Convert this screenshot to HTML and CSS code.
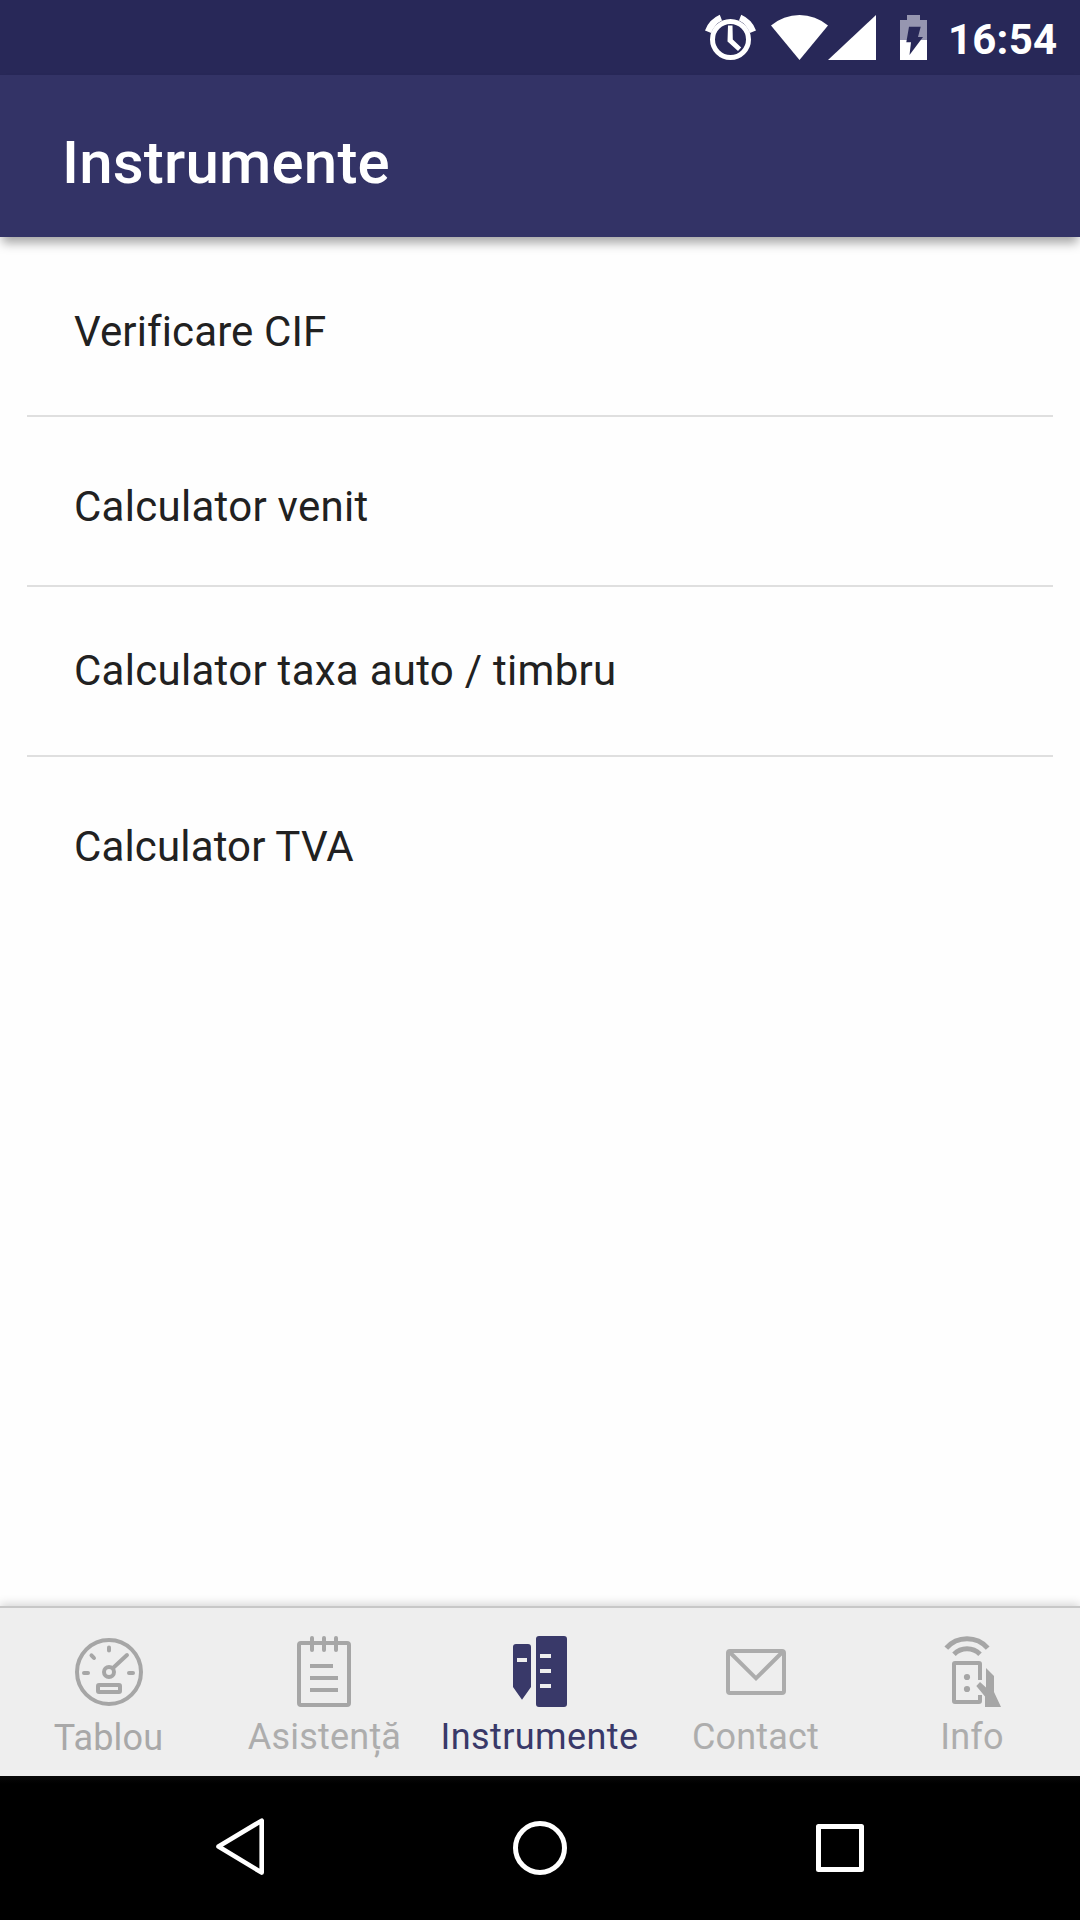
FILE: index.html
```html
<!DOCTYPE html>
<html lang="ro">
<head>
<meta charset="utf-8">
<title>Instrumente</title>
<link rel="stylesheet" href="styles.css">
</head>
<body>
<div class="screen">
  <div class="status-bar">
    <svg class="alarm" width="54" height="50" viewBox="0 0 54 50">
      <circle cx="26.5" cy="27.5" r="18" fill="none" stroke="#fff" stroke-width="5"/>
      <path fill="#fff" d="M1 18.4Q5 7.5 15.8 2.8L18 8.4Q10.6 12 7.2 20.9ZM52 18.4Q48 7.5 37.2 2.8L35 8.4Q42.4 12 45.8 20.9ZM24 13.4H28.5L28.8 27.4L37.2 35.4L34 38.9L23.5 29.6Z"/>
    </svg>
    <svg class="wifi" width="57" height="45" viewBox="0 0 57 45"><path fill="#fff" d="M28.5 45L0 10.5A44 44 0 0 1 57 10.5Z"/></svg>
    <svg class="signal" width="48" height="45" viewBox="0 0 48 45"><path fill="#fff" d="M48 0V45H0Z"/></svg>
    <svg class="battery" width="27" height="45" viewBox="0 0 27 45">
      <path fill="#9696b0" d="M7 0H20V5H27V25H0V5H7Z"/>
      <path fill="#fff" d="M0 25H27V45H0Z"/>
      <path fill="#282858" d="M9 11.7H20.7L18 22H23L9.5 40L11 27.3H6.3Z"/>
    </svg>
    <span class="time">16:54</span>
  </div>

  <header class="app-bar"><h1 class="title">Instrumente</h1></header>

  <main class="content">
    <ul class="tools">
      <li class="tool">Verificare CIF</li>
      <li class="tool">Calculator venit</li>
      <li class="tool">Calculator taxa auto / timbru</li>
      <li class="tool">Calculator TVA</li>
    </ul>
  </main>

  <nav class="tabs">
    <a class="tab tab-dashboard">
      <svg width="72" height="72" viewBox="0 0 72 72" fill="none" stroke="currentColor" stroke-width="4" stroke-linecap="round">
        <circle cx="37" cy="36" r="32"/>
        <circle cx="37" cy="36" r="5"/>
        <path d="M41 32L55 19M37 11.5V14.5M19.5 19.3L22 22M12 37H16M57 37H61"/>
        <rect x="26" y="49" width="22" height="7" rx="1"/>
      </svg>
      <span class="label">Tablou</span>
    </a>
    <a class="tab tab-assist">
      <svg width="72" height="72" viewBox="0 0 72 72" fill="none" stroke="currentColor" stroke-width="4">
        <rect x="11" y="7" width="50" height="62" rx="2"/>
        <path stroke-linecap="round" d="M24 2V14M36 2V14M48 2V14"/>
        <path d="M22 30H45M22 42H50M22 54H50"/>
      </svg>
      <span class="label">Asistență</span>
    </a>
    <a class="tab tab-tools active">
      <svg width="72" height="72" viewBox="0 0 72 72" fill="currentColor" fill-rule="evenodd">
        <path d="M12 8H24Q27 8 27 11V51L18 63.7L9 51V11Q9 8 12 8ZM13 22V26H23V22Z"/>
        <path d="M35 0H60Q63 0 63 3V68Q63 71 60 71H35Q32 71 32 68V3Q32 0 35 0ZM36 18V22H47V18ZM36 33V37H47V33ZM36 48V52H47V48Z"/>
      </svg>
      <span class="label">Instrumente</span>
    </a>
    <a class="tab tab-contact">
      <svg width="72" height="72" viewBox="0 0 72 72" fill="none" stroke="currentColor" stroke-width="4">
        <rect x="8" y="15" width="56" height="42" rx="2"/>
        <path d="M9 15.5L36 42.3L63 15.5"/>
      </svg>
      <span class="label">Contact</span>
    </a>
    <a class="tab tab-info">
      <svg width="72" height="72" viewBox="0 0 72 72" fill="none" stroke="currentColor" stroke-width="4">
        <path stroke-width="5" d="M10.3 12.2A27.6 27.6 0 0 1 51.7 12.2M18 18.2A18.5 18.5 0 0 1 44 18.2"/>
        <path d="M44 44V28Q44 27 43 27H19Q18 27 18 28V65Q18 66 19 66H43Q44 66 44 65V59"/>
        <g fill="currentColor" stroke="none">
          <circle cx="31" cy="41" r="3.1"/>
          <circle cx="31" cy="53" r="3.1"/>
          <path d="M50 32L58 40V56L65 71H49V60.5L40.3 50L44 46L50 51.5Z"/>
        </g>
      </svg>
      <span class="label">Info</span>
    </a>
  </nav>

  <div class="system-nav">
    <svg width="54" height="60" viewBox="0 0 54 60" fill="none" stroke="#fff" stroke-width="4.6" stroke-linejoin="round"><path d="M5.5 28.5L48.7 2.6V54.6Z"/></svg>
    <svg width="54" height="54" viewBox="0 0 54 54" fill="none" stroke="#fff" stroke-width="5"><circle cx="27" cy="27" r="24.5"/></svg>
    <svg width="54" height="54" viewBox="0 0 54 54" fill="none" stroke="#fff" stroke-width="5" stroke-linejoin="round"><path d="M5.5 5.5H48.5V48.5H5.5Z"/></svg>
  </div>
</div>
</body>
</html>
```

FILE: styles.css
```css
* {
  box-sizing: border-box;
}

body {
  margin: 0;
  font-family: Roboto, sans-serif;
}

.screen {
  display: flex;
  flex-direction: column;
  width: 1080px;
  height: 1920px;
  background: #fefefe;
  overflow: hidden;
}

.status-bar {
  display: flex;
  flex: none;
  align-items: flex-start;
  justify-content: flex-end;
  height: 75px;
  padding-top: 15px;
  background: #282858;
  color: #fff;
}

.alarm {
  margin: -3px 13px 0 0;
}

.battery {
  margin: 0 21px 0 24px;
}

.time {
  width: 132px;
  font-size: 42px;
  font-weight: 700;
  line-height: 49px;
  letter-spacing: 0.2px;
}

.app-bar {
  flex: none;
  height: 162px;
  padding: 52px 62px 0;
  background: #333366;
  box-shadow: 0 8px 10px -2px rgba(0, 0, 0, 0.35);
}

.title {
  margin: 0;
  color: #fff;
  font-size: 60px;
  font-weight: 500;
  line-height: 71px;
  letter-spacing: 0.2px;
}

.content {
  flex: 1;
  padding: 10px 27px 0;
}

.tools {
  margin: 0;
  padding: 0;
  list-style: none;
}

.tool {
  height: 170px;
  padding: 60px 0 0 47px;
  border-bottom: 2px solid #dfdfdf;
  color: #212121;
  font-size: 42px;
  line-height: 49px;
  letter-spacing: 0.28px;
}

.tool:first-child {
  letter-spacing: 0.12px;
}

.tool:nth-child(2n) {
  padding-top: 65px;
}

.tool:nth-child(3) {
  padding-top: 59px;
}

.tool:last-child {
  border-bottom: 0;
  letter-spacing: 0.15px;
}

.tabs {
  display: grid;
  flex: none;
  grid-template-columns: repeat(5, 1fr);
  height: 170px;
  border-top: 2px solid #c8c8c8;
  background: #eee;
  box-shadow: 0 -2px 9px rgba(0, 0, 0, 0.17);
}

.tab {
  display: flex;
  flex-direction: column;
  align-items: center;
  gap: 8px;
  padding-top: 28px;
  color: #a6a6a6;
}

.tab-contact {
  color: #acacac;
}

.label {
  color: #adadad;
  font-size: 36px;
  line-height: 42px;
  letter-spacing: 0.2px;
  white-space: nowrap;
}

.tab-dashboard .label {
  padding: 1px 0 0 1px;
  color: #a8a8a8;
}

.tab-assist .label {
  padding-left: 1px;
}

.tab-contact .label {
  padding-right: 1px;
}

.active,
.active .label {
  color: #393969;
}

.active .label {
  padding-right: 1px;
  letter-spacing: 0.4px;
}

.system-nav {
  display: flex;
  flex: none;
  align-items: center;
  justify-content: space-between;
  height: 144px;
  padding: 0 213px;
  background: linear-gradient(#080808, #000 8px);
}
```
